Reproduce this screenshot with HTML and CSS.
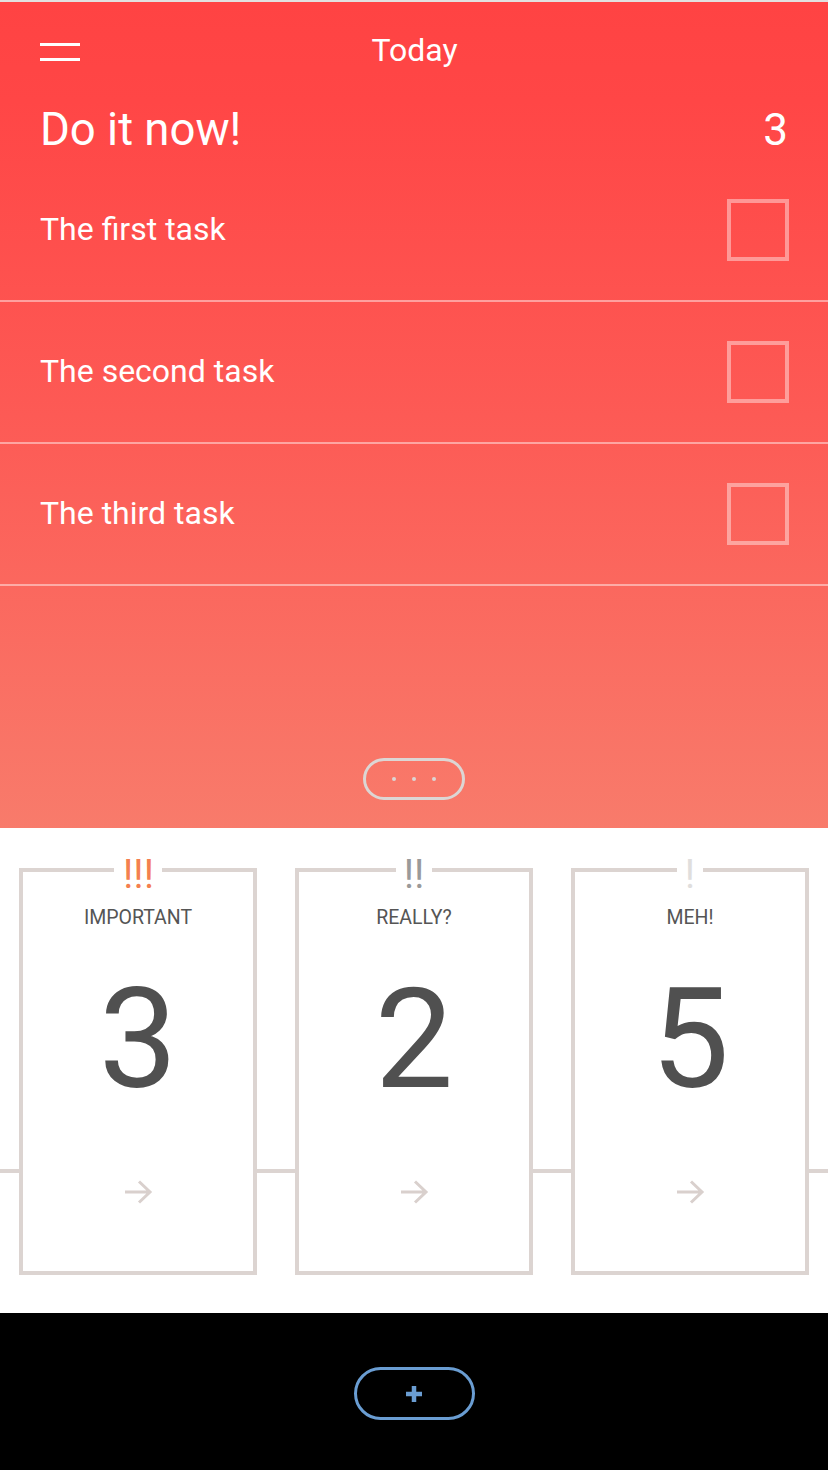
FILE: index.html
```html
<!DOCTYPE html>
<html lang="en">
<head>
<meta charset="utf-8">
<title>Today</title>
<link rel="stylesheet" href="styles.css">
</head>
<body>
<div class="app">
  <header class="hero">
    <div class="topbar">
      <span class="menu"><i></i><i></i></span>
      <h1 class="today">Today</h1>
      <span></span>
    </div>
    <div class="title-row">
      <h2 class="title">Do it now!</h2>
      <span class="count">3</span>
    </div>
    <ul class="tasks">
      <li class="task"><span class="task-text">The first task</span><span class="check"></span></li>
      <li class="task"><span class="task-text">The second task</span><span class="check"></span></li>
      <li class="task"><span class="task-text">The third task</span><span class="check"></span></li>
    </ul>
    <div class="more"><i></i><i></i><i></i></div>
  </header>

  <section class="buckets">
    <div class="card">
      <span class="marks marks-high">!!!</span>
      <span class="label">IMPORTANT</span>
      <span class="num">3</span>
      <svg class="arrow" width="30" height="24" viewBox="0 0 30 24"><path d="M2 12 H27 M16 1.5 L27 12 L16 22.5" fill="none" stroke="#d9d0cd" stroke-width="3"/></svg>
    </div>
    <div class="card">
      <span class="marks marks-mid">!!</span>
      <span class="label">REALLY?</span>
      <span class="num">2</span>
      <svg class="arrow" width="30" height="24" viewBox="0 0 30 24"><path d="M2 12 H27 M16 1.5 L27 12 L16 22.5" fill="none" stroke="#d9d0cd" stroke-width="3"/></svg>
    </div>
    <div class="card">
      <span class="marks marks-low">!</span>
      <span class="label">MEH!</span>
      <span class="num">5</span>
      <svg class="arrow" width="30" height="24" viewBox="0 0 30 24"><path d="M2 12 H27 M16 1.5 L27 12 L16 22.5" fill="none" stroke="#d9d0cd" stroke-width="3"/></svg>
    </div>
  </section>

  <footer class="bar">
    <button class="add" type="button" aria-label="Add">
      <svg width="16" height="16" viewBox="0 0 16 16"><path d="M8 0 V16 M0 8 H16" stroke="#6a9dd2" stroke-width="4.5"/></svg>
    </button>
  </footer>
</div>
</body>
</html>
```

FILE: styles.css
```css
* { box-sizing: border-box; }

html, body {
  margin: 0;
  padding: 0;
  background: #000;
}

body {
  font-family: Roboto, "Liberation Sans", Arial, sans-serif;
  width: 828px;
  height: 1470px;
  overflow: hidden;
}

.app {
  width: 828px;
  height: 1470px;
  border-top: 2px solid #e2e0df;
  display: flex;
  flex-direction: column;
}

/* ---------- hero ---------- */
.hero {
  height: 826px;
  flex: none;
  background: linear-gradient(to bottom, #ff4343 0%, #ff4646 12%, #fd5a55 50%, #f87b6b 100%);
  color: #fff;
  display: flex;
  flex-direction: column;
}

.topbar {
  height: 96px;
  padding: 0 39px 0 40px;
  display: grid;
  grid-template-columns: 1fr auto 1fr;
  align-items: center;
}

.menu {
  width: 40px;
  height: 18px;
  margin-top: 4px;
  display: flex;
  flex-direction: column;
  justify-content: space-between;
}

.menu i {
  display: block;
  height: 3px;
  background: #fff;
}

.today {
  margin: 0;
  font-size: 32px;
  font-weight: 400;
  line-height: 36px;
}

.title-row {
  height: 62px;
  padding: 0 40px 0 40px;
  display: flex;
  align-items: center;
  justify-content: space-between;
}

.title {
  margin: 0;
  font-size: 45.5px;
  font-weight: 400;
  line-height: 52px;
  margin-top: 2px;
}

.count {
  font-size: 44px;
  line-height: 52px;
  margin-top: 2px;
}

.tasks {
  list-style: none;
  margin: 0;
  padding: 0;
}

.task {
  height: 142px;
  padding: 0 39px 0 40px;
  border-bottom: 2px solid rgba(255, 255, 255, 0.45);
  display: flex;
  align-items: center;
  justify-content: space-between;
  font-size: 32px;
}

.task-text {
  padding-bottom: 3px;
}

.check {
  width: 62px;
  height: 62px;
  border: 4px solid rgba(255, 255, 255, 0.42);
}

.more {
  margin: auto auto 28px;
  width: 102px;
  height: 42px;
  border: 3px solid #dcd6d4;
  border-radius: 21px;
  display: flex;
  align-items: center;
  justify-content: center;
  gap: 16px;
}

.more i {
  width: 4px;
  height: 4px;
  border-radius: 50%;
  background: #dcd6d4;
}

/* ---------- buckets ---------- */
.buckets {
  height: 485px;
  flex: none;
  padding: 40px 19px 0;
  display: flex;
  gap: 38px;
  background: #fff linear-gradient(to bottom, transparent 341px, #dcd4d1 341px, #dcd4d1 345px, transparent 345px);
}

.card {
  width: 238px;
  height: 407px;
  border: 4px solid #dcd4d1;
  background: #fff;
  display: flex;
  flex-direction: column;
  align-items: center;
}

.marks {
  margin-top: -17px;
  padding: 0 8px;
  background: #fff;
  font-size: 40px;
  line-height: 40px;
}

.marks-high { color: #f4804f; padding: 0 8px 0 9px; }
.marks-mid { color: #9a9a9a; }
.marks-low { color: #e0dedd; }

.label {
  margin-top: 12px;
  font-size: 19.5px;
  line-height: 22px;
  color: #555;
}

.num {
  margin-top: 40px;
  font-size: 140px;
  line-height: 140px;
  color: #505050;
}

.arrow {
  margin-top: 71px;
}

/* ---------- footer ---------- */
.bar {
  flex: 1;
  background: #000;
  display: flex;
  align-items: center;
  justify-content: center;
  padding-top: 4px;
}

.add {
  width: 121px;
  height: 53px;
  border: 3px solid #6a9dd2;
  border-radius: 27px;
  background: transparent;
  display: flex;
  align-items: center;
  justify-content: center;
  padding: 0;
}
```
